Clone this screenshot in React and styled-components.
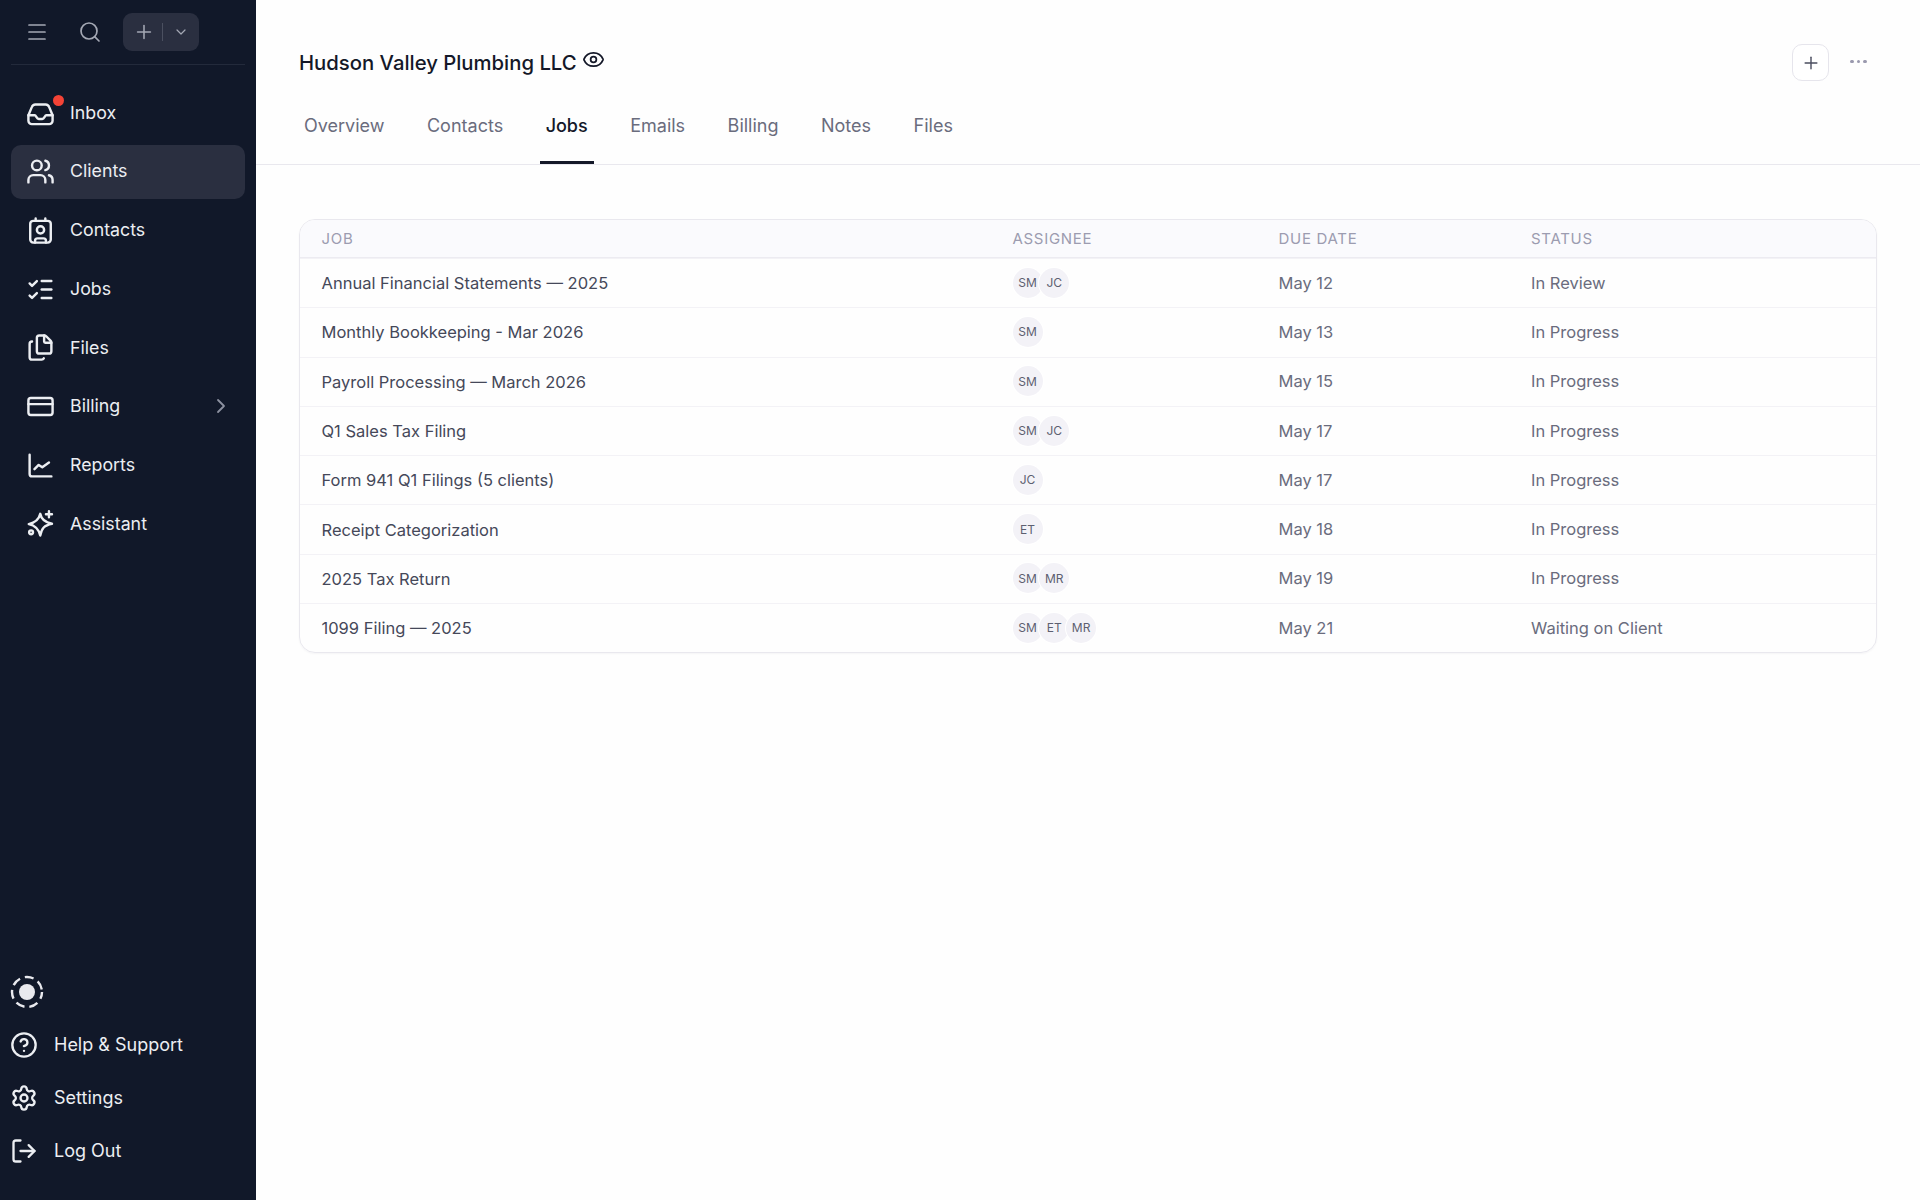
import React from "react";
import styled, { createGlobalStyle } from "styled-components";
import { Menu, Search, Plus, ChevronDown, ChevronRight, Users, ListChecks, Files, CreditCard, CircleHelp, Settings, LogOut, Eye } from "lucide-react";

const FONT = `"Inter", "Noto Sans", "Liberation Sans", sans-serif`;

const Global = createGlobalStyle`
  html, body { margin: 0; padding: 0; height: 100%; background: #fff; }
  body { font-family: ${FONT}; -webkit-font-smoothing: antialiased; }
  #root { height: 100%; }
  * { box-sizing: border-box; }
`;

const Page = styled.div`
  display: flex;
  height: 1200px;
  overflow: hidden;
`;
const Sidebar = styled.aside`
  width: 256px;
  flex: none;
  background: #111829;
  display: flex;
  flex-direction: column;
  color: #eceef2;
`;
const TopBar = styled.div`
  height: 65px;
  margin: 0 11px;
  padding-bottom: 1px;
  border-bottom: 1px solid #232a3b;
  display: flex;
  align-items: center;
  color: #a4a8b4;
`;
const TopIcon = styled.span`
  display: flex;
  width: ${p => p.$w}px;
  justify-content: center;
`;
const QuickAdd = styled.div`
  margin-left: 6px;
  width: 76px;
  height: 38px;
  border-radius: 9px;
  background: #2a2f40;
  display: flex;
  align-items: center;
  padding-left: 10px;
  color: #a4a8b4;
`;
const Separator = styled.span`
  width: 1px;
  height: 18px;
  background: #4b5060;
  margin: 0 10px 0 7px;
`;
const Nav = styled.nav`
  display: flex;
  flex-direction: column;
  gap: 4.7px;
  padding: 21px 11px 0;
`;
const NavRow = styled.div`
  position: relative;
  height: 54px;
  padding: 0 12px 0 15px;
  border-radius: 10px;
  display: flex;
  align-items: center;
  gap: 15px;
  font-size: 17.8px;
  background: ${p => (p.$active ? "#2a2f40" : "transparent")};
`;
const NavLabel = styled.span`
  margin-top: -1.5px;
`;
const Badge = styled.span`
  position: absolute;
  left: 42px;
  top: 9px;
  width: 11px;
  height: 11px;
  border-radius: 50%;
  background: #f44336;
`;
const Caret = styled.span`
  margin-left: auto;
  display: flex;
  color: #8d91a0;
`;
const Bottom = styled.div`
  margin-top: auto;
  padding: 0 0 23px 10px;
  display: flex;
  flex-direction: column;
`;
const LogoWrap = styled.div`
  height: 38px;
  display: flex;
  align-items: center;
  margin-bottom: 7px;
`;
const BottomRow = styled.div`
  height: 53px;
  display: flex;
  align-items: center;
  gap: 16px;
  font-size: 18px;
`;
const Main = styled.main`
  flex: 1;
  min-width: 0;
  display: flex;
  flex-direction: column;
  background: #fefefe;
`;
const Header = styled.header`
  height: 165px;
  border-bottom: 1px solid #e9e8ee;
  padding: 44px 53px 0 43px;
  display: flex;
  flex-direction: column;
`;
const TitleRow = styled.div`
  display: flex;
  align-items: center;
  height: 37px;
`;
const Title = styled.h1`
  margin: 0;
  font-size: 20.3px;
  font-weight: 500;
  color: #141828;
  line-height: 37px;
`;
const EyeIcon = styled.span`
  display: flex;
  margin: -6px 0 0 5px;
  color: #141828;
`;
const Actions = styled.div`
  margin-left: auto;
  display: flex;
  align-items: center;
  gap: 21px;
`;
const AddButton = styled.button`
  width: 37px;
  height: 37px;
  border: 1px solid #e6e5ec;
  border-radius: 10px;
  background: #fff;
  color: #4a4d5f;
  display: flex;
  align-items: center;
  justify-content: center;
  padding: 0;
`;
const Dots = styled.span`
  display: flex;
  gap: 3px;
  width: 17px;
  margin-top: -2px;
  justify-content: center;
`;
const Dot = styled.i`
  width: 3.6px;
  height: 3.6px;
  flex: none;
  border-radius: 50%;
  background: #9a99ae;
`;
const Tabs = styled.div`
  display: flex;
  gap: 30.5px;
  margin: 16px 0 0 -1px;
  height: 68px;
`;
const Tab = styled.div`
  padding: 0 6px;
  height: 67px;
  line-height: 58px;
  font-size: 18px;
  color: ${p => (p.$active ? "#141828" : "#6a6c7d")};
  font-weight: ${p => (p.$active ? 500 : 400)};
  border-bottom: 3px solid ${p => (p.$active ? "#141828" : "transparent")};
`;
const Content = styled.div`
  padding: 54px 43px 0;
`;
const Table = styled.div`
  border: 1px solid #e9e8ee;
  border-radius: 16px;
  overflow: hidden;
  box-shadow: 0 1px 2px rgba(20, 20, 50, 0.04);
`;
const Row = styled.div`
  display: grid;
  grid-template-columns: 691px 266px 252.5px 1fr;
  align-items: center;
  padding: 0 0 1px 21.5px;
  height: 49.3px;
  border-top: 1px solid #f3f2f6;
  font-size: 16.5px;
  color: #6a6c7d;
`;
const HeadRow = styled(Row)`
  height: 38px;
  padding-bottom: 0;
  border-top: none;
  border-bottom: 1px solid #ecebf1;
  background: #fafafd;
  font-size: 15px;
  letter-spacing: 0.7px;
  color: #9c9cb0;
  text-transform: uppercase;
`;
const JobName = styled.div`
  color: #454859;
  padding-top: 1px;
`;
const AvatarStack = styled.div`
  display: flex;
`;
const Avatar = styled.span`
  width: 30px;
  height: 30px;
  border-radius: 50%;
  background: #f3f2f7;
  box-shadow: 0 0 0 1px #fff;
  margin-right: -3.2px;
  display: flex;
  align-items: center;
  justify-content: center;
  font-size: 12px;
  color: #5d5f70;
`;

const Icon = ({ size = 29, sw = 2, children }) => (
  <svg width={size} height={size} viewBox="0 0 24 24" fill="none" stroke="currentColor" strokeWidth={sw} strokeLinecap="round" strokeLinejoin="round">{children}</svg>
);
const InboxIcon = () => (
  <Icon>
    <path d="M2 13.500l2.800-6.800A3.300 3.300 0 0 1 7.800 4.500h8.400a3.300 3.300 0 0 1 3 2.200L22 13.500v4.500a2.800 2.800 0 0 1-2.800 2.800H4.800A2.800 2.800 0 0 1 2 18z" />
    <path d="M2 13.500h5.200c1.300 0 1.500 3 3.300 3h3c1.800 0 2-3 3.300-3H22" />
  </Icon>
);
const ContactIcon = () => (
  <Icon>
    <path d="M16 2v2M8 2v2" />
    <rect x="3.500" y="4" width="17" height="18" rx="2.500" />
    <circle cx="12" cy="11.500" r="3" />
    <path d="M7.500 22v-1.500a2 2 0 0 1 2-2h5a2 2 0 0 1 2 2V22" />
  </Icon>
);
const ChartIcon = () => (
  <Icon>
    <path d="M3 3v16a2 2 0 0 0 2 2h16" />
    <path d="M7 15l3.500-3.500 3 2L19 9.500" />
  </Icon>
);
const SparkIcon = () => (
  <Icon>
    <path d="M11.800 4C12.600 8.500 15 11 21.500 12.200 15 13.500 13 16 11.800 22 10.600 16.500 8 13.700 2.300 12.500 8.200 11.200 10.800 8.500 11.800 4z" />
    <path d="M19 1.800v5M16.500 4.300h5" />
    <circle cx="4.200" cy="19.300" r="1.600" />
  </Icon>
);
const Logo = () => (
  <svg width="34" height="34" viewBox="0 0 34 34" fill="none">
    <circle cx="17" cy="17" r="15" stroke="#e9e9ee" strokeWidth="2.400" strokeDasharray="9 5" strokeDashoffset="2" />
    <circle cx="17" cy="17" r="8" fill="#e9e9ee" />
  </svg>
);

const nav = [
  ["Inbox", <InboxIcon />],
  ["Clients", <Users size={29} strokeWidth={2} />],
  ["Contacts", <ContactIcon />],
  ["Jobs", <ListChecks size={29} strokeWidth={2} />],
  ["Files", <Files size={29} strokeWidth={2} />],
  ["Billing", <CreditCard size={29} strokeWidth={2} />],
  ["Reports", <ChartIcon />],
  ["Assistant", <SparkIcon />],
];
const bottom = [
  ["Help & Support", <CircleHelp size={28} strokeWidth={2} />],
  ["Settings", <Settings size={28} strokeWidth={2} />],
  ["Log Out", <LogOut size={28} strokeWidth={2} />],
];
const tabs = ["Overview", "Contacts", "Jobs", "Emails", "Billing", "Notes", "Files"];
const jobs = [
  ["Annual Financial Statements — 2025", ["SM", "JC"], "May 12", "In Review"],
  ["Monthly Bookkeeping - Mar 2026", ["SM"], "May 13", "In Progress"],
  ["Payroll Processing — March 2026", ["SM"], "May 15", "In Progress"],
  ["Q1 Sales Tax Filing", ["SM", "JC"], "May 17", "In Progress"],
  ["Form 941 Q1 Filings (5 clients)", ["JC"], "May 17", "In Progress"],
  ["Receipt Categorization", ["ET"], "May 18", "In Progress"],
  ["2025 Tax Return", ["SM", "MR"], "May 19", "In Progress"],
  ["1099 Filing — 2025", ["SM", "ET", "MR"], "May 21", "Waiting on Client"],
];

export default function App() {
  return (
    <Page>
      <Global />
      <Sidebar>
        <TopBar>
          <TopIcon $w={52}><Menu size={24} strokeWidth={1.7} /></TopIcon>
          <TopIcon $w={54}><Search size={24} strokeWidth={1.7} /></TopIcon>
          <QuickAdd>
            <Plus size={22} strokeWidth={1.7} />
            <Separator />
            <ChevronDown size={16} strokeWidth={1.8} />
          </QuickAdd>
        </TopBar>
        <Nav>
          {nav.map(([label, icon]) => (
            <NavRow key={label} $active={label === "Clients"}>
              {icon}
              <NavLabel>{label}</NavLabel>
              {label === "Inbox" && <Badge />}
              {label === "Billing" && <Caret><ChevronRight size={24} strokeWidth={1.8} /></Caret>}
            </NavRow>
          ))}
        </Nav>
        <Bottom>
          <LogoWrap><Logo /></LogoWrap>
          {bottom.map(([label, icon]) => (
            <BottomRow key={label}>{icon}{label}</BottomRow>
          ))}
        </Bottom>
      </Sidebar>
      <Main>
        <Header>
          <TitleRow>
            <Title>Hudson Valley Plumbing LLC</Title>
            <EyeIcon><Eye size={23} strokeWidth={1.8} /></EyeIcon>
            <Actions>
              <AddButton><Plus size={20} strokeWidth={1.7} /></AddButton>
              <Dots><Dot /><Dot /><Dot /></Dots>
            </Actions>
          </TitleRow>
          <Tabs>
            {tabs.map(t => <Tab key={t} $active={t === "Jobs"}>{t}</Tab>)}
          </Tabs>
        </Header>
        <Content>
          <Table>
            <HeadRow><div>Job</div><div>Assignee</div><div>Due Date</div><div>Status</div></HeadRow>
            {jobs.map(([name, who, due, status]) => (
              <Row key={name}>
                <JobName>{name}</JobName>
                <AvatarStack>{who.map(w => <Avatar key={w}>{w}</Avatar>)}</AvatarStack>
                <div>{due}</div>
                <div>{status}</div>
              </Row>
            ))}
          </Table>
        </Content>
      </Main>
    </Page>
  );
}
